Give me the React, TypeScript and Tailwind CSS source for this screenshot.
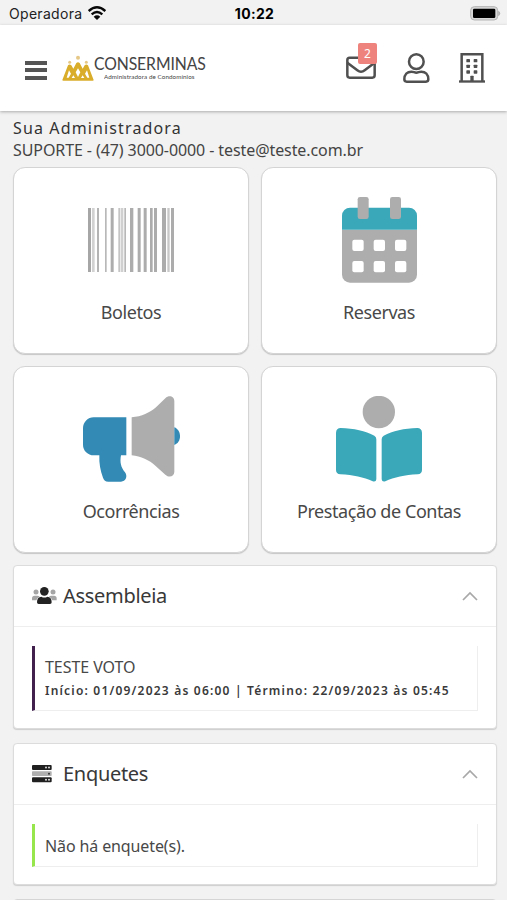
import type { ReactNode } from "react";

const bars: [number, number, string][] = [
  [0, 9, "#a6a6a6"], [12, 8, "#d2d2d2"], [27, 6, "#b4b4b4"], [51, 5, "#b8b8b8"],
  [68, 9, "#adadad"], [91, 6, "#c4c4c4"], [99, 7, "#d0d0d0"], [109, 5, "#b8b8b8"],
  [126, 10, "#acacac"], [149, 9, "#acacac"], [167, 9, "#acacac"], [186, 8, "#acacac"],
  [198, 9, "#acacac"], [222, 12, "#acacac"], [238, 7, "#c8c8c8"], [249, 9, "#acacac"],
];

function BarcodeIcon() {
  return (
    <svg className="h-[64px] w-[86px]" viewBox="0 0 258 192">
      {bars.map(([x, w, fill]) => <rect key={x} x={x} width={w} height="192" fill={fill} />)}
    </svg>
  );
}

function CalendarIcon() {
  return (
    <svg className="h-[86px] w-[75px]" viewBox="0 0 225 258">
      <path d="M0 98H225V233a24 24 0 0 1-24 24H24a24 24 0 0 1-24-24Z" fill="#adadad" />
      <path d="M0 98V56a24 24 0 0 1 24-24H201a24 24 0 0 1 24 24V98Z" fill="#3ba8ba" />
      {[47, 144].map((x) => <rect key={x} x={x} y="0" width="33" height="66" rx="7" fill="#adadad" />)}
      {[31, 95, 159].map((x) =>
        [128, 192].map((y) => <rect key={`${x}-${y}`} x={x} y={y} width="34" height="34" rx="6" fill="#fff" />),
      )}
    </svg>
  );
}

function MegaphoneIcon() {
  return (
    <svg className="h-[86px] w-[97px]" viewBox="248 107 291 258">
      <path d="M280 171H378V285H362C358 306 362 322 374 336C383 348 376 364 362 364H324C315 364 311 360 308 352C300 331 296 309 297 285H280A32 32 0 0 1 248 253V203A32 32 0 0 1 280 171Z" fill="#338ab4" />
      <path d="M394 171C424 169 448 157 467 141L495 114C506 103 522 108 522 123V334C522 348 507 354 495 343L466 317C446 299 422 288 394 285Z" fill="#adadad" />
      <path d="M522 201C533 205 539 216 539 228S533 250 522 254Z" fill="#338ab4" />
    </svg>
  );
}

function ReaderIcon() {
  return (
    <svg className="h-[86px] w-[86px]" viewBox="244 108 258 258">
      <circle cx="372.500" cy="156" r="48.500" fill="#adadad" />
      <path d="M258 204C298 205 332 213 359 227Q365 231 365 238V358Q364 367 354 364C327 352 296 345 257 343Q244 342 244 330V218Q245 204 258 204Z" fill="#3ba8ba" />
      <path d="M488 204C448 205 414 213 387 227Q381 231 381 238V358Q382 367 392 364C419 352 450 345 489 343Q502 342 502 330V218Q501 204 488 204Z" fill="#3ba8ba" />
    </svg>
  );
}

function Crowns() {
  return (
    <svg className="h-[26px] w-[32px] shrink-0" viewBox="187 166 96 78">
      <g fill="#e6c888">
        <circle cx="235" cy="174" r="6" />
        <circle cx="210" cy="188" r="4.500" />
        <circle cx="260" cy="188" r="4.500" />
      </g>
      <path d="M188 241L205 197Q210 192 215 197L221 207L230 190Q235 185 240 190L249 207L255 197Q260 192 265 197L282 241Q282 243 279 243H191Q188 243 188 241Z" fill="#d9ad2a" />
      <path d="M208 212L214 222L207 234H201ZM235 206L242 218L235 232L228 218ZM262 212L269 234H263L256 222ZM221 227L226 235H216ZM249 227L254 235H244Z" fill="#fff" />
    </svg>
  );
}

function MailIcon() {
  return (
    <svg className="h-[24px] w-[30px]" viewBox="265 169 90 72" fill="none" stroke="#505050" strokeWidth="7.500">
      <rect x="269" y="174" width="82" height="60" rx="7" />
      <path d="M269 189L299 212Q310 221 321 212L351 189" />
    </svg>
  );
}

function UserIcon() {
  return (
    <svg className="h-[30px] w-[27px]" viewBox="437 159 81 90" fill="none" stroke="#505050" strokeWidth="7.500">
      <circle cx="477" cy="185" r="22" />
      <path d="M441 238C441 223 450 215 462 215C469 215 471 218 477 218S485 215 492 215C504 215 513 223 513 238Q513 245 506 245H448Q441 245 441 238Z" />
    </svg>
  );
}

function BuildingIcon() {
  return (
    <svg className="h-[30px] w-[26px]" viewBox="604 159 78 90">
      <path d="M612 244V163H674V244" fill="none" stroke="#505050" strokeWidth="7.500" />
      <path d="M604 241H682V248H604Z" fill="#505050" />
      {[626, 648].map((x) => [177, 194, 211].map((y) => <rect key={`${x}-${y}`} x={x} y={y} width="11" height="10" rx="2" fill="#505050" />))}
      <rect x="638" y="227" width="10" height="18" rx="2" fill="#505050" />
    </svg>
  );
}

function WifiIcon() {
  return (
    <svg className="h-[14px] w-[18px]" viewBox="264 17 54 42" fill="none" stroke="#080808" strokeWidth="7">
      <path d="M266 32Q291 10 316 32M275 42Q291 28 307 42" />
      <path d="M281 49Q291 41 301 49L291 59Z" fill="#080808" stroke="none" />
    </svg>
  );
}

function BatteryIcon() {
  return (
    <svg className="mt-[1px] h-[15px] w-[31px]" viewBox="639 17 93 45">
      <rect x="641" y="19" width="81" height="40" rx="11" fill="#d8d8d8" stroke="#b4b4b4" strokeWidth="3" />
      <rect x="648" y="25" width="67" height="28" rx="4" fill="#000" />
      <path d="M725 33Q732 39 725 46Z" fill="#a9a9a9" stroke="#a9a9a9" strokeWidth="2" />
    </svg>
  );
}

function PeopleIcon() {
  return (
    <svg className="h-[18px] w-[25px]" viewBox="98 96 75 54">
      <g fill="#a5a5a5">
        <circle cx="110" cy="111" r="7.500" />
        <circle cx="161" cy="111" r="7.500" />
        <path d="M98 136V130Q98 122 106 122H114Q119 122 121 125Q113 129 111 136ZM172 136V130Q172 122 164 122H156Q151 122 149 125Q157 129 159 136Z" />
      </g>
      <circle cx="135" cy="109" r="13" fill="#222" />
      <path d="M113 142Q113 126 126 125Q135 130 144 125Q157 126 157 142Q157 147 152 147H118Q113 147 113 142Z" fill="#222" />
    </svg>
  );
}

function ServerIcon() {
  return (
    <svg className="h-[18px] w-[20px]" viewBox="98 105 60 54">
      <rect x="98" y="105" width="59" height="15" rx="3" fill="#202020" />
      <rect x="98" y="124" width="59" height="14" rx="2" fill="#b0b0b0" />
      <rect x="98" y="142" width="59" height="15" rx="3" fill="#202020" />
      {[112.5, 149.5].map((y) => (
        <g key={y} fill="#ddd">
          <circle cx="140" cy={y} r="3" />
          <circle cx="149" cy={y} r="3" />
        </g>
      ))}
      <circle cx="149" cy="131" r="3" fill="#333" />
    </svg>
  );
}

function Tile({ label, children }: { label: string; children: ReactNode }) {
  return (
    <div className="flex h-[187px] flex-col items-center rounded-[12px] border border-[#d4d4d4] bg-white pt-[29px] shadow-[0_1px_1px_#c6c6c6]">
      <div className="flex h-[86px] items-center justify-center">{children}</div>
      <span className="mt-[16px] whitespace-nowrap text-[18px] leading-[26px] tracking-[-0.430px] text-[#484848]">{label}</span>
    </div>
  );
}

function Panel({ icon, title, height, children }: { icon: ReactNode; title: string; height: string; children: ReactNode }) {
  return (
    <section className={`rounded-[4px] border border-[#dcdcdc] bg-white shadow-[0_1px_1px_#cecece] ${height}`}>
      <div className="flex h-[61px] items-center border-b border-[#eeeeee] pl-[18px] pr-[18px]">
        <span className="flex w-[31px] items-center">{icon}</span>
        <h2 className="flex-1 text-[20px] font-normal tracking-[-0.300px] text-[#383838]">{title}</h2>
        <svg className="h-[10px] w-[16px]" viewBox="0 0 16 10" fill="none" stroke="#a8a8a8" strokeWidth="1.700">
          <path d="M1 9L8 2L15 9" />
        </svg>
      </div>
      <div className="px-[18px] pt-[19px]">{children}</div>
    </section>
  );
}

export default function App() {
  return (
    <div className="flex h-[900px] w-[507px] flex-col overflow-hidden bg-[#f2f2f2] font-['Noto_Sans',sans-serif]">
      <div className="grid h-[25px] shrink-0 grid-cols-3 items-center pl-[9px] pr-[6px] font-['Inter',sans-serif] text-[14px] text-[#222]">
        <div className="flex items-center gap-[6px]">
          <span className="w-[73px] whitespace-nowrap pt-[1px] tracking-[0.300px]">Operadora</span>
          <WifiIcon />
        </div>
        <span className="pr-[1px] pt-[2px] text-center font-bold tracking-[0.300px] text-black">10:22</span>
        <div className="flex justify-end"><BatteryIcon /></div>
      </div>
      <header className="z-10 flex h-[86px] shrink-0 items-center bg-white pl-[25px] pr-[22px] shadow-[0_1px_3px_#aaaaaa]">
        <div className="mt-[4px] flex h-[19px] w-[22px] flex-col justify-between">
          <span className="h-[4px] bg-[#555]" />
          <span className="h-[4px] bg-[#555]" />
          <span className="h-[4px] bg-[#555]" />
        </div>
        <div className="ml-[15px] flex items-center">
          <Crowns />
          <div className="whitespace-nowrap font-['Lato',sans-serif] text-[#444]">
            <div className="origin-left scale-x-[0.9] text-[17.500px] leading-[18px] tracking-[-0.100px]">CONSERMINAS</div>
            <div className="ml-[10px] origin-left scale-x-[0.960] text-[6.500px] leading-[8px] tracking-[0.100px]">Administradora de Condomínios</div>
          </div>
        </div>
        <div className="ml-auto flex items-center">
          <div className="relative mr-[27px]">
            <MailIcon />
            <span className="absolute -top-[13px] left-[12px] flex h-[21px] w-[19px] items-center justify-center rounded-[2px] bg-[#ee837d] text-[12px] text-white">2</span>
          </div>
          <div className="mr-[29px]"><UserIcon /></div>
          <BuildingIcon />
        </div>
      </header>
      <main className="px-[13px] pt-[6px]">
        <p className="h-[22px] text-[16px] leading-[22px] tracking-[1.130px] text-[#333]">Sua Administradora</p>
        <p className="h-[22px] whitespace-nowrap text-[16px] leading-[22px] tracking-[-0.090px] text-[#444]">SUPORTE - (47) 3000-0000 - teste@teste.com.br</p>
        <div className="-mr-[3px] mt-[6px] grid grid-cols-2 gap-x-[12px] gap-y-[12px]">
          <Tile label="Boletos"><BarcodeIcon /></Tile>
          <Tile label="Reservas"><CalendarIcon /></Tile>
          <Tile label="Ocorrências"><MegaphoneIcon /></Tile>
          <Tile label="Prestação de Contas"><ReaderIcon /></Tile>
        </div>
        <div className="-mr-[3px] mt-[12px] flex flex-col gap-[14px]">
          <Panel icon={<PeopleIcon />} title="Assembleia" height="h-[164px]">
            <div className="h-[65px] border-b border-l-[3px] border-r border-b-[#eee] border-l-[#42204e] border-r-[#eee] pl-[10px] pt-[10px]">
              <p className="text-[16px] leading-[23px] tracking-[-0.050px] text-[#484848]">TESTE VOTO</p>
              <p className="whitespace-nowrap text-[12px] font-semibold leading-[23px] tracking-[1.200px] text-[#3a3a3a]">Início: 01/09/2023 às 06:00 | Término: 22/09/2023 às 05:45</p>
            </div>
          </Panel>
          <Panel icon={<ServerIcon />} title="Enquetes" height="h-[142px]">
            <div className="flex h-[43px] items-center border-b border-l-[3px] border-r border-b-[#eee] border-l-[#97e64c] border-r-[#eee] pl-[10px] pt-[1px] text-[16px] tracking-[-0.120px] text-[#484848]">Não há enquete(s).</div>
          </Panel>
          <div className="h-[20px] rounded-[4px] border border-[#d5d5d5] bg-white" />
        </div>
      </main>
    </div>
  );
}
